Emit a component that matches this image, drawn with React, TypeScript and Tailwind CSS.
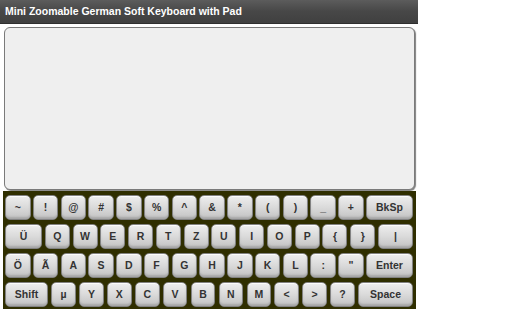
import React from "react";

const row1 = ["~", "!", "@", "#", "$", "%", "^", "&", "*", "(", ")", "_", "+"];
const row2 = ["Q", "W", "E", "R", "T", "Z", "U", "I", "O", "P", "{", "}"];
const row3 = ["Ö", "Ã", "A", "S", "D", "F", "G", "H", "J", "K", "L", ":", "\""];
const row4 = ["µ", "Y", "X", "C", "V", "B", "N", "M", "<", ">", "?"];

function Key({ label, w }: { label: string; w: string }) {
  return (
    <div
      className={`${w} h-[25px] shrink-0 flex items-center justify-center rounded-[5px] border border-[#828282] bg-gradient-to-b from-[#eeeeee] via-[#dadada] to-[#c2c2c2] text-[10.5px] font-bold text-[#333] shadow-[inset_0_-2px_2px_rgba(0,0,0,0.15),inset_0_1px_1px_rgba(255,255,255,0.9)]`}
      style={{ fontFamily: '"Liberation Sans", Arial, sans-serif' }}
    >
      {label}
    </div>
  );
}

export default function App() {
  return (
    <div className="w-[512px] h-[320px] bg-white" style={{ fontFamily: '"Liberation Sans", Arial, sans-serif' }}>
      <div className="w-[418px] h-[24px] bg-gradient-to-b from-[#5c5c5c] via-[#474747] to-[#404040] border-b border-[#2f2f2f] flex items-center pl-[5px]">
        <span className="text-white font-bold text-[10.5px] leading-none">Mini Zoomable German Soft Keyboard with Pad</span>
      </div>
      <div className="w-[418px] pl-[4px] pr-[3px] pt-[3px]">
        <div className="w-[411px] h-[163px] rounded-[6px] border border-[#7a7a7a] bg-[#efefef] shadow-[1px_1px_1px_rgba(0,0,0,0.5)]" />
      </div>
      <div className="ml-[3px] mt-[1px] w-[413px] h-[118px] bg-[#2f2e00] pl-[2px] pr-[3px] pt-[4px] flex flex-col gap-[4px]">
        <div className="flex justify-between">
          {row1.map((k) => (
            <Key key={k} label={k} w="w-[25.5px]" />
          ))}
          <Key label="BkSp" w="w-[47px]" />
        </div>
        <div className="flex justify-between">
          <Key label="Ü" w="w-[37px]" />
          {row2.map((k) => (
            <Key key={k} label={k} w="w-[25px]" />
          ))}
          <Key label="|" w="w-[35px]" />
        </div>
        <div className="flex justify-between">
          {row3.map((k) => (
            <Key key={k} label={k} w="w-[25.5px]" />
          ))}
          <Key label="Enter" w="w-[47px]" />
        </div>
        <div className="flex justify-between">
          <Key label="Shift" w="w-[43px]" />
          {row4.map((k) => (
            <Key key={k} label={k} w="w-[24.5px]" />
          ))}
          <Key label="Space" w="w-[55px]" />
        </div>
      </div>
    </div>
  );
}
